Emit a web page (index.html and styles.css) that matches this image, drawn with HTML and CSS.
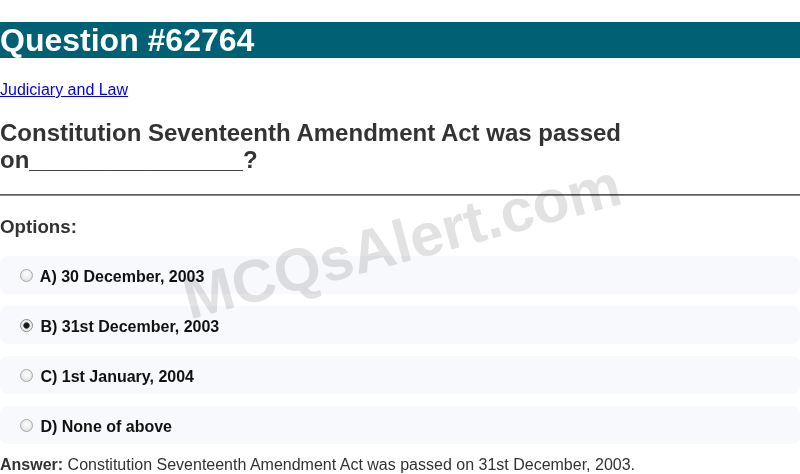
FILE: index.html
```html
<!DOCTYPE html>
<html>
<head>
<meta charset="utf-8">
<link rel="stylesheet" href="styles.css">
</head>
<body>
<div class="page">
  <h1 class="title">Question #62764</h1>
  <a class="cat" href="#">Judiciary and Law</a>
  <h2 class="question">Constitution Seventeenth Amendment Act was passed on________________?</h2>
  <hr class="rule">
  <h3 class="opts-label">Options:</h3>
  <div class="options">
    <label class="option"><input type="radio" name="q"> A) 30 December, 2003</label>
    <label class="option"><input type="radio" name="q" checked> B) 31st December, 2003</label>
    <label class="option"><input type="radio" name="q"> C) 1st January, 2004</label>
    <label class="option"><input type="radio" name="q"> D) None of above</label>
  </div>
  <p class="answer"><b>Answer:</b> Constitution Seventeenth Amendment Act was passed on 31st December, 2003.</p>
  <div class="watermark">MCQsAlert.com</div>
</div>
</body>
</html>
```
FILE: styles.css
```css
html, body {
  margin: 0;
  padding: 0;
  background: #fff;
}
body {
  font-family: "Liberation Sans", Arial, sans-serif;
  color: #333;
  overflow: hidden;
}
.page {
  position: relative;
  width: 800px;
  height: 474px;
  padding-top: 22px;
  box-sizing: border-box;
}
.title {
  margin: 0;
  background: #016174;
  color: #fff;
  font-size: 32px;
  font-weight: bold;
  line-height: 36px;
  height: 36px;
}
.cat {
  display: inline-block;
  margin-top: 23px;
  font-size: 16px;
  line-height: 18px;
  color: #0000ee;
}
.question {
  margin: 20px 0 0 0;
  font-size: 24px;
  line-height: 27px;
  font-weight: bold;
  color: #333;
  max-width: 650px;
}
.rule {
  margin: 21px 0 0 0;
  border: 0;
  border-top: 1px solid #5a5a5a;
  border-bottom: 1px solid #8a8a8a;
  height: 0;
}
.opts-label {
  margin: 20px 0 0 0;
  font-size: 18.72px;
  line-height: 22px;
  font-weight: bold;
  color: #333;
}
.options {
  display: flex;
  flex-direction: column;
  gap: 12px;
  margin-top: 18px;
}
.option {
  display: flex;
  align-items: center;
  box-sizing: border-box;
  height: 38px;
  padding: 4px 0 0 15px;
  background: #f8f9fc;
  border-radius: 8px;
  font-size: 16px;
  font-weight: bold;
  color: #111;
  white-space: pre;
}
.option input {
  -webkit-appearance: none;
  appearance: none;
  box-sizing: border-box;
  margin: 0 3px 4px 5px;
  width: 13px;
  height: 13px;
  border-radius: 50%;
  border: 1px solid #a8a8a8;
  background: radial-gradient(circle at 50% 40%, #ffffff 0%, #f0f0f0 45%, #d4d4d4 100%);
}
.option input:checked {
  border-color: #8c8c8c;
  background: radial-gradient(circle at 50% 50%, #1a1a1a 0, #1a1a1a 2.2px, #6a6a6a 3px, #e6e6e6 3.6px, #f2f2f2 60%, #d0d0d0 100%);
}
.answer {
  margin: 12px 0 0 0;
  font-size: 16px;
  line-height: 18px;
  color: #333;
}
.answer b {
  color: #333;
}
.watermark {
  position: absolute;
  left: 402px;
  top: 242px;
  transform: translate(-50%, -50%) rotate(-15deg);
  font-size: 60px;
  font-weight: bold;
  color: #e2e2e2;
  mix-blend-mode: multiply;
  pointer-events: none;
  white-space: nowrap;
  line-height: 1;
}
```
